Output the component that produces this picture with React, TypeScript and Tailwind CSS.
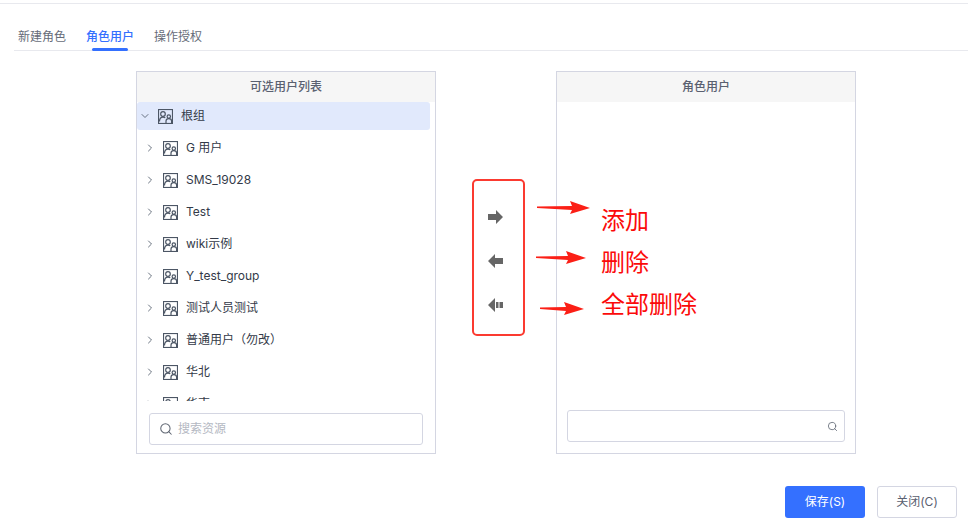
import { ChevronDown, ChevronRight, Search } from 'lucide-react'

const groups = ['G 用户', 'SMS_19028', 'Test', 'wiki示例', 'Y_test_group', '测试人员测试', '普通用户（勿改）', '华北', '华南']
const tabs = ['新建角色', '角色用户', '操作授权']

function GroupIcon() {
  return (
    <svg width="15" height="15" viewBox="0 0 15 15" fill="none" stroke="#4c5665" strokeWidth="1.2" className="shrink-0">
      <rect x="0.5" y="0.5" width="14" height="14" />
      <circle cx="5" cy="5" r="2.3" />
      <path d="M1.5 12.5c0-3 1.5-4.4 3.5-4.4 1 0 1.7.3 2.3.8" />
      <circle cx="10.8" cy="7.6" r="1.7" />
      <path d="M8 14.5v-2.5c0-1.4 1.2-2.4 2.8-2.4s2.8 1 2.8 2.4v2.5" />
    </svg>
  )
}

function RedArrow({ width }: { width: number }) {
  return (
    <svg width={width} height="14" viewBox={`0 0 ${width} 14`} className="block">
      <polygon fill="#fb1f16" points={`0,5.5 ${width - 18},5 ${width - 20},0 ${width},7 ${width - 20},13 ${width - 18},9 0,7`} />
    </svg>
  )
}

export default function App() {
  return (
    <div className="relative flex h-[531px] w-[968px] flex-col overflow-hidden bg-white font-['Inter','Noto_Sans_CJK_SC',sans-serif] text-xs text-[#333a48]">
      <div className="h-[4px] border-b border-[#e8e9ee]" />

      {/* Tabs */}
      <div className="ml-[14px] flex h-[47px] gap-[20px] border-b border-[#e8e9ee] pl-[4px] pt-[24px]">
        {tabs.map((tab) => (
          <div key={tab} className={`relative h-[22px] leading-[18px] ${tab === '角色用户' ? 'font-medium text-[#3470ff]' : 'text-[#666c78]'}`}>
            {tab}
            {tab === '角色用户' && <div className="absolute -bottom-px left-[6px] h-[3px] w-[36px] rounded-full bg-[#3470ff]" />}
          </div>
        ))}
      </div>

      {/* Transfer */}
      <div className="ml-[136px] mt-[20px] flex">
        <div className="flex h-[383px] w-[300px] flex-col border border-[#d4d6e2]">
          <div className="flex h-[30px] shrink-0 items-center justify-center bg-[#f6f6f6] font-medium text-[#5a6070]">可选用户列表</div>
          <div className="h-[299px] shrink-0 overflow-hidden">
            <div className="mr-[5px] flex h-[28px] items-center rounded-[3px] bg-[#e1e9fc] pl-[2px]">
              <ChevronDown size={12} strokeWidth={1.75} className="mr-[7px] shrink-0 text-[#56606f]" />
              <GroupIcon />
              <span className="ml-[8px]">根组</span>
            </div>
            {groups.map((group) => (
              <div key={group} className="mt-[4px] flex h-[28px] items-center pl-[7px]">
                <ChevronRight size={12} strokeWidth={1.75} className="mr-[7px] shrink-0 text-[#56606f]" />
                <GroupIcon />
                <span className="ml-[8px]">{group}</span>
              </div>
            ))}
          </div>
          <div className="mx-[12px] mt-[12px] flex h-[32px] items-center rounded-[3px] border border-[#d4d6e2] pl-[9px] text-[#b4b8c2]">
            <Search size={14} strokeWidth={1.75} className="mr-[5px] text-[#5d6470]" />
            搜索资源
          </div>
        </div>

        <div className="flex w-[120px] flex-col items-center gap-[30px] pt-[139px]">
          <svg width="16" height="14" viewBox="0 0 16 14" fill="#666"><path d="M0 4h8V0l7 7-7 7v-4H0z" /></svg>
          <svg width="16" height="14" viewBox="0 0 16 14" fill="#666"><path d="M15 4H7V0L0 7l7 7v-4h8z" /></svg>
          <svg width="16" height="14" viewBox="0 0 16 14" fill="#666"><path d="M7 0v14L0 7zM8 4h2.5v6H8zM11.5 4H15v6h-3.5z" /></svg>
        </div>

        <div className="flex h-[383px] w-[300px] flex-col border border-[#d4d6e2]">
          <div className="flex h-[30px] shrink-0 items-center justify-center bg-[#f6f6f6] font-medium text-[#5a6070]">角色用户</div>
          <div className="mx-[10px] mt-[308px] flex h-[32px] items-center justify-end rounded-[3px] border border-[#d4d6e2] pr-[6px]">
            <Search size={11} strokeWidth={1.75} className="text-[#5d6470]" />
          </div>
        </div>
      </div>

      {/* Footer */}
      <div className="mr-[11px] mt-[32px] flex justify-end gap-[12px]">
        <div className="flex h-[32px] w-[80px] items-center justify-center rounded-[3px] bg-[#3470ff] text-white">保存(S)</div>
        <div className="flex h-[32px] w-[80px] items-center justify-center rounded-[3px] border border-[#d4d6e2] text-[#5a6070]">关闭(C)</div>
      </div>

      {/* Red annotations drawn over the screenshot */}
      <div className="absolute left-[472px] top-[179px] h-[157px] w-[53px] rounded-[5px] border-2 border-[#fb3a30]" />
      <div className="absolute left-[537px] top-[201px]"><RedArrow width={53} /></div>
      <div className="absolute left-[536px] top-[251px]"><RedArrow width={50} /></div>
      <div className="absolute left-[540px] top-[302px]"><RedArrow width={44} /></div>
      <div className="absolute left-[601px] top-[204px] text-2xl leading-[34px] text-[#fb0a0a]">添加</div>
      <div className="absolute left-[601px] top-[246px] text-2xl leading-[34px] text-[#fb0a0a]">删除</div>
      <div className="absolute left-[601px] top-[288px] text-2xl leading-[34px] text-[#fb0a0a]">全部删除</div>
    </div>
  )
}
